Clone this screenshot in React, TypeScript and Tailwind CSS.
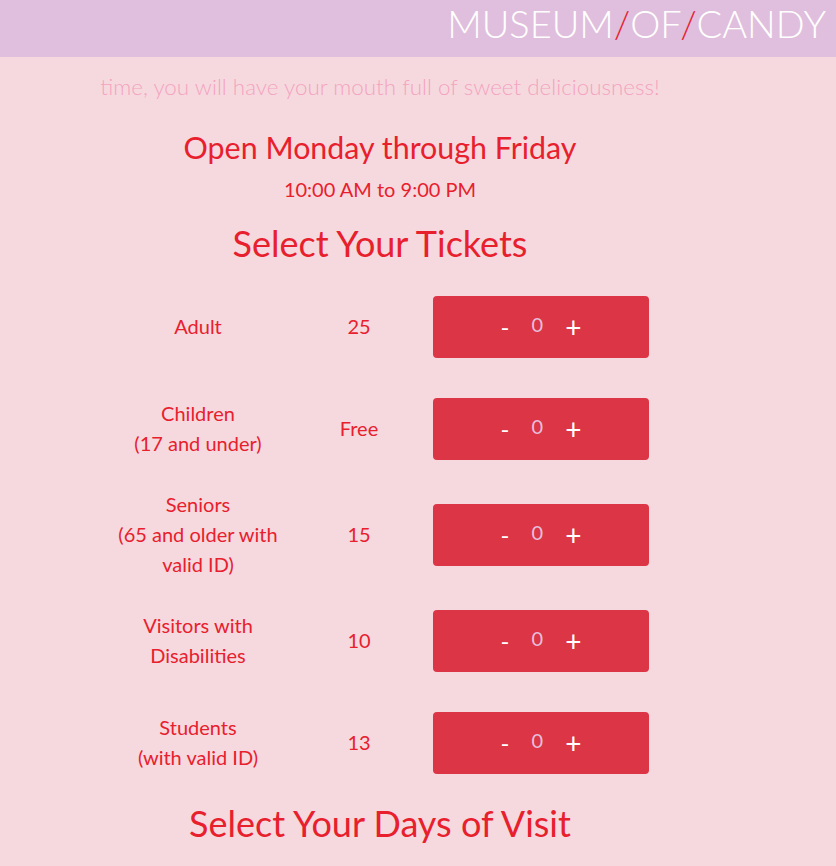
const tickets = [
  { label: ["Adult"], price: "25" },
  { label: ["Children", "(17 and under)"], price: "Free" },
  { label: ["Seniors", "(65 and older with", "valid ID)"], price: "15" },
  { label: ["Visitors with", "Disabilities"], price: "10" },
  { label: ["Students", "(with valid ID)"], price: "13" },
];

const Counter = () => (
  <div className="my-5 ml-[11px] flex h-[62px] w-[216px] items-center justify-center gap-[22px] rounded-[4px] bg-[#dc3545] text-white">
    <span className="text-[24px] leading-none">-</span>
    <span className="mb-[6px] text-[20px] leading-none text-[#e6bfdc]">0</span>
    <span className="text-[28px] leading-none">+</span>
  </div>
);

export default function App() {
  return (
    <div
      className="min-h-[866px] w-full bg-[#f6d9de]"
      style={{ fontFamily: "Lato, 'Noto Sans', sans-serif" }}
    >
      <header className="flex h-[57px] items-start justify-end bg-[#dfbfdd] pr-[10px]">
        <h1 className="text-[38px] font-light leading-[46px] text-white">
          MUSEUM<span className="text-[#e8202d]">/</span>OF
          <span className="text-[#e8202d]">/</span>CANDY
        </h1>
      </header>

      <main className="flex w-[760px] flex-col items-center text-center text-[#e8202d]">
        <p className="mt-[18px] -translate-y-px text-[22.4px] font-light leading-[26px] text-[#f4a3c0]">
          time, you will have your mouth full of sweet deliciousness!
        </p>
        <h2 className="mt-[29px] -translate-y-px text-[30.4px] leading-[36px]">
          Open Monday through Friday
        </h2>
        <p className="mt-[11px] -translate-y-px text-[20px] leading-[26px]">
          10:00 AM to 9:00 PM
        </p>
        <h2 className="mt-[19px] -translate-y-px text-[36px] leading-[44px]">
          Select Your Tickets
        </h2>

        <div className="mt-[10px] flex w-[560px] flex-col">
          {tickets.map((t) => (
            <div key={t.price} className="flex items-center">
              <div className="w-[196px] py-[10px] text-[20px] leading-[30px]">
                {t.label.map((line) => (
                  <div key={line} className="-translate-y-px">
                    {line}
                  </div>
                ))}
              </div>
              <div className="w-[126px] -translate-y-px text-[20px] leading-[30px]">
                {t.price}
              </div>
              <Counter />
            </div>
          ))}
        </div>

        <h2 className="mt-[7px] text-[36px] leading-[44px]">
          Select Your Days of Visit
        </h2>
      </main>
    </div>
  );
}
